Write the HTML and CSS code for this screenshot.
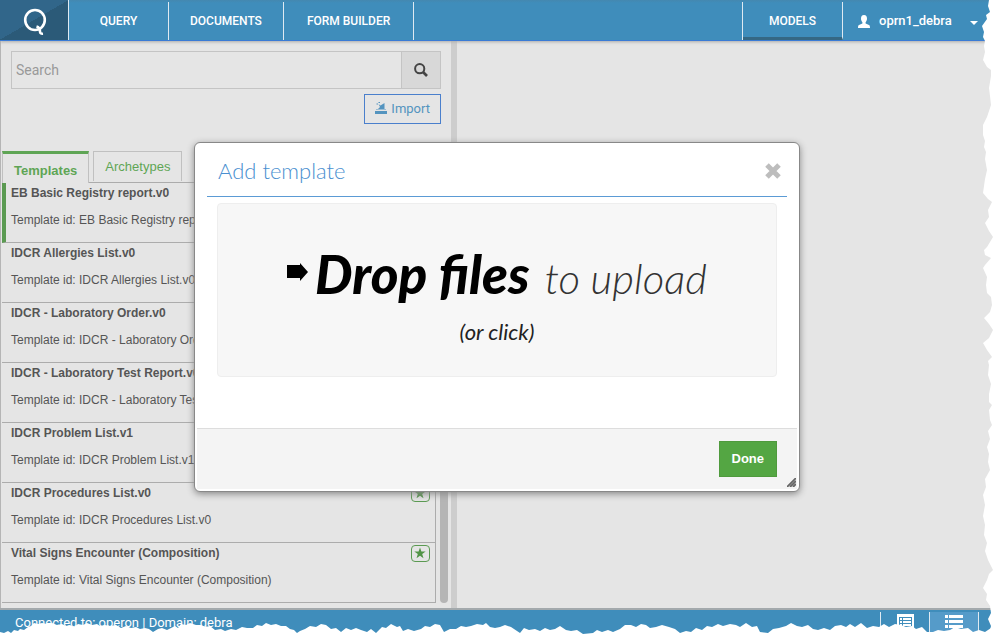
FILE: index.html
```
<!DOCTYPE html>
<html lang="en">
<head>
<meta charset="utf-8">
<title>Models</title>
<link rel="stylesheet" href="styles.css">
</head>
<body>
<svg width="0" height="0" class="defs" aria-hidden="true">
  <symbol id="star" viewBox="0 0 12 12"><path d="M6 .5l1.400 4H11.700L8.200 7l1.300 4.300L6 8.700 2.500 11.300 3.800 7 .3 4.500h4.300z"/></symbol>
</svg>
<div class="app">
  <header class="topbar">
    <a class="logo" href="#" aria-label="Home">
      <svg width="26" height="28" viewBox="0 0 26 28" fill="none" stroke="#fff" stroke-width="2.600"><ellipse cx="14" cy="12" rx="9.800" ry="10"/><path d="M15.500 18.500q3.500 1 3.500 5 0 2.500 3 2.200"/></svg>
    </a>
    <nav class="nav">
      <a href="#">QUERY</a>
      <a href="#">DOCUMENTS</a>
      <a href="#">FORM BUILDER</a>
    </nav>
    <nav class="nav nav-right">
      <a class="active" href="#">MODELS</a>
    </nav>
    <button class="user" type="button">
      <svg width="12" height="13" viewBox="0 0 12 13" fill="#fff"><path d="M6 0C3.800 0 3 1.600 3 3.600c0 1.600.6 2.800 1.400 3.600v1.300L1 10C.3 10.400 0 11 0 13h12c0-2-.3-2.600-1-3L7.600 8.500V7.200C8.400 6.400 9 5.200 9 3.600 9 1.600 8.200 0 6 0z"/></svg>
      <span>oprn1_debra</span>
      <svg class="caret" width="8" height="4" viewBox="0 0 8 4" fill="#fff"><path d="M0 0h8L4 4z"/></svg>
    </button>
  </header>

  <main class="workspace">
    <section class="sidebar">
      <div class="tools">
        <form class="search">
          <input type="text" placeholder="Search" aria-label="Search">
          <button type="button" aria-label="Run search">
            <svg width="14" height="14" viewBox="0 0 14 14" fill="none" stroke="#444" stroke-width="2"><circle cx="5.700" cy="5.700" r="4.600"/><path d="M9 9l4 4" stroke-width="2.600"/></svg>
          </button>
        </form>
        <button class="import" type="button">
          <svg width="12" height="12" viewBox="0 0 12 12" fill="#5494bf"><path d="M0 9h12v3H0zM1 7.500h10V8H1zM3.500 2l2 1.500L9.500 1v6H3l2-2z"/><path d="M1.500 1.500h1.500v1H1.500zM3.500 0H5v1H3.500z"/></svg>
          <span>Import</span>
        </button>
      </div>
      <div class="tabs" role="tablist">
        <button class="tab selected" type="button" role="tab" aria-selected="true">Templates</button>
        <button class="tab" type="button" role="tab" aria-selected="false">Archetypes</button>
      </div>
      <div class="list-wrap">
        <ul class="list">
          <li class="current"><div><h3>EB Basic Registry report.v0</h3><p>Template id: EB Basic Registry report.v0</p></div><button class="star" type="button" aria-label="Favourite"><svg width="12" height="12"><use href="#star"/></svg></button></li>
          <li><div><h3>IDCR Allergies List.v0</h3><p>Template id: IDCR Allergies List.v0</p></div><button class="star" type="button" aria-label="Favourite"><svg width="12" height="12"><use href="#star"/></svg></button></li>
          <li><div><h3>IDCR - Laboratory Order.v0</h3><p>Template id: IDCR - Laboratory Order.v0</p></div><button class="star" type="button" aria-label="Favourite"><svg width="12" height="12"><use href="#star"/></svg></button></li>
          <li><div><h3>IDCR - Laboratory Test Report.v0</h3><p>Template id: IDCR - Laboratory Test Report.v0</p></div><button class="star" type="button" aria-label="Favourite"><svg width="12" height="12"><use href="#star"/></svg></button></li>
          <li><div><h3>IDCR Problem List.v1</h3><p>Template id: IDCR Problem List.v1</p></div><button class="star" type="button" aria-label="Favourite"><svg width="12" height="12"><use href="#star"/></svg></button></li>
          <li><div><h3>IDCR Procedures List.v0</h3><p>Template id: IDCR Procedures List.v0</p></div><button class="star" type="button" aria-label="Favourite"><svg width="12" height="12"><use href="#star"/></svg></button></li>
          <li><div><h3>Vital Signs Encounter (Composition)</h3><p>Template id: Vital Signs Encounter (Composition)</p></div><button class="star" type="button" aria-label="Favourite"><svg width="12" height="12"><use href="#star"/></svg></button></li>
        </ul>
        <div class="scrollbar"></div>
      </div>
    </section>
    <div class="splitter"></div>
    <section class="detail"></section>
  </main>

  <footer class="statusbar">
    <p>Connected to: operon | Domain: debra</p>
    <div class="views">
      <button type="button" aria-label="Form view">
        <svg width="17" height="17" viewBox="0 0 17 17"><path d="M0 0h17v17H0z" fill="#fff"/><path d="M2 3h13v12H2z" fill="#3f8dbb"/><path d="M3 4h2v2H3zM6 4h8v2H6zM3 7h2v2H3zM6 7h8v2H6zM3 10h2v2H3zM6 10h8v2H6z" fill="#fff"/></svg>
      </button>
      <button class="on" type="button" aria-label="List view">
        <svg width="18" height="16" viewBox="0 0 18 16" fill="#fff"><path d="M0 1h3v3H0zM4 1h14v3H4zM0 6h3v3H0zM4 6h14v3H4zM0 11h3v3H0zM4 11h14v3H4z"/></svg>
      </button>
    </div>
  </footer>
</div>

<div class="overlay">
  <section class="dialog" role="dialog" aria-labelledby="dialog-title">
    <header>
      <h2 id="dialog-title">Add template</h2>
      <button class="close" type="button" aria-label="Close">
        <svg width="16" height="16" viewBox="0 0 16 16" stroke="#bdbdbd" stroke-width="5"><path d="M2 2l12 12M14 2L2 14"/></svg>
      </button>
    </header>
    <button class="dropzone" type="button">
      <span class="drop-line">
        <svg width="21" height="18" viewBox="0 0 21 18"><path d="M0 2h13V0l8 9-8 9v-3H0z"/></svg>
        <strong>Drop files</strong>
        <em>to upload</em>
      </span>
      <span class="click">(or click)</span>
    </button>
    <footer>
      <button class="done" type="button">Done</button>
      <svg class="grip" width="9" height="9" viewBox="0 0 9 9" stroke="#666" stroke-width="1.800"><path d="M0 9L9 0M3 9l6-6M6 9l3-3"/></svg>
    </footer>
  </section>
</div>

<svg class="tear-bottom" viewBox="0 0 994 30" preserveAspectRatio="none" fill="#fff" aria-hidden="true"><path d="M0 30V28L4 29 8 27 11 29 14 26 18 27 20 25 24 26 28 23 31 22 34 19 38 20 42 19 47 20 52 19 57 21 62 20 66 22 70 21 74 23 78 20 83 21 87 19 92 21 97 20 100 22 105 21 110 22 116 21 121 24 126 22 131 24 136 23 140 25 145 24 149 25 153 28 158 25 162 24 167 26 171 24 175 22 178 24 181 20 186 21 190 19 196 21 201 21 205 23 210 22 215 26 221 25 225 27 231 25 236 26 242 23 247 24 253 24 257 21 262 22 266 19 271 21 276 20 281 22 286 22 290 25 294 26 297 29 300 27 305 25 310 22 316 23 321 20 326 21 331 25 336 24 341 28 346 24 351 26 356 24 361 26 367 28 371 25 376 29 382 23 386 24 391 20 397 23 400 22 403 27 408 25 414 27 421 25 425 22 430 23 435 20 440 21 444 28 450 25 456 25 461 22 466 23 471 22 477 20 483 21 486 19 490 23 495 24 500 23 505 21 511 23 517 27 520 29 524 24 529 26 535 25 540 27 545 24 550 26 555 25 560 22 566 26 571 27 577 26 583 30 593 29 597 26 602 28 608 26 613 28 620 25 625 21 631 21 636 23 641 20 646 21 650 24 656 23 662 21 669 23 675 25 680 29 686 27 691 28 696 24 702 26 707 22 712 23 718 20 723 22 730 20 736 21 740 23 746 19 752 23 757 22 760 28 768 29 773 25 779 24 786 22 791 19 797 22 802 23 808 21 813 25 818 26 824 24 830 26 835 22 841 21 846 23 850 20 855 23 861 19 867 24 873 22 879 23 884 20 889 23 895 20 901 21 906 23 912 22 916 25 922 23 927 28 933 28 938 26 944 27 950 26 955 23 961 25 968 24 973 28 979 26 985 28 991 24 994 19V30z"/></svg>
<svg class="tear-right" viewBox="0 0 14 634" preserveAspectRatio="none" fill="#fff" aria-hidden="true"><path d="M14 0H9L8 6 10 12 6 15 7 19 2 26 4 32 3 37 5 41 4 46 5 52 3 60 7 67 11 70 11 76 9 88 10 96 11 105 7 117 3 125 3 135 5 141 4 147 6 152 5 159 7 170 5 179 3 193 8 199 12 202 8 210 9 217 5 223 9 231 13 237 7 247 4 250 5 255 11 258 5 265 3 268 7 277 6 285 7 293 11 297 12 305 10 312 4 318 9 324 13 330 9 338 3 343 7 350 12 357 8 361 9 365 8 375 11 384 9 394 9 402 12 405 9 410 10 420 12 425 8 431 10 439 7 447 9 454 8 462 10 470 5 479 6 487 3 495 5 505 3 516 5 525 4 535 7 543 5 551 8 560 13 570 9 574 7 580 3 588 7 594 6 600 10 606 11 613 8 619 11 626 9 634H14z"/></svg>
</body>
</html>
```
FILE: styles.css
```
* { box-sizing: border-box; }

body {
  margin: 0;
  background: #fff;
  color: #555;
  font: 12px/16px "Liberation Sans", Arial, sans-serif;
}

h2, h3, p, ul { margin: 0; padding: 0; }
button, input { font: inherit; color: inherit; margin: 0; }
button { cursor: pointer; }
svg { display: block; flex: none; }
.defs { position: absolute; }

.app {
  display: flex;
  flex-direction: column;
  min-height: 100vh;
  overflow: hidden;
}

/* Top bar */
.topbar {
  display: flex;
  height: 41px;
  padding-top: 2px;
  background: linear-gradient(#4488b0, #3f8dbb 3px);
  border-bottom: 1px solid #3a7bd5;
  box-shadow: 0 1px 3px #aaa;
  font: 500 13px/38px Roboto, sans-serif;
  color: #fff;
  position: relative;
}

.logo {
  width: 69px;
  margin-top: -2px;
  display: flex;
  align-items: center;
  justify-content: center;
  padding-top: 4px;
  border-right: 1px solid #dfeaf2;
  background: linear-gradient(150deg, #31668a 50%, #2b5a78 50%);
}

.nav { display: flex; font-size: 12px; }
.nav a {
  padding: 0 23px;
  min-width: 100px;
  text-align: center;
  border-right: 1px solid #dfeaf2;
  color: #fff;
  text-decoration: none;
}
.nav a:nth-child(2) { padding: 0 21px; }
.nav-right { margin-left: auto; border-left: 1px solid #dfeaf2; }
.nav a.active { border-bottom: 3px solid #356884; }

.user {
  display: flex;
  align-items: center;
  width: 151px;
  padding: 0 15px;
  border: 0;
  background: none;
}
.user span { margin-left: 9px; }
.user .caret { margin: 3px 0 0 18px; }

/* Workspace */
.workspace { flex: 1; display: flex; background: #e5e5e5; }

.sidebar {
  width: 451px;
  display: flex;
  flex-direction: column;
  border-left: 1px solid #b5b5b5;
}
.splitter { width: 6px; background: #cdcdcd; }
.detail { flex: 1; }

.tools {
  display: flex;
  flex-direction: column;
  align-items: flex-end;
  gap: 5px;
  padding: 10px 10px 0;
  font: 14px/20px Roboto, sans-serif;
}

.search { display: flex; align-self: stretch; height: 38px; }
.search input {
  flex: 1;
  min-width: 0;
  padding: 0 4px;
  border: 1px solid #c4c4c4;
  background: #e5e5e5;
}
.search input::placeholder { color: #999; opacity: 1; }
.search button {
  width: 39px;
  padding: 0 12px;
  border: 1px solid #c4c4c4;
  border-left: 0;
  background: #d8d8d8;
}

.import {
  display: flex;
  gap: 4px;
  height: 30px;
  padding: 4px 10px;
  border: 1px solid #4a7fcc;
  background: none;
  color: #5494bf;
  font-size: 13px;
}
.import svg { margin-top: 3px; }

.tabs {
  display: flex;
  gap: 4px;
  height: 32px;
  margin: 27px 0 -1px 1px;
  font-size: 13px;
}
.tab {
  height: 30px;
  padding: 0 11px;
  border: 1px solid #c0c0c0;
  border-bottom: 0;
  background: #e5e5e5;
  color: #5fa555;
}
.tab.selected {
  height: 32px;
  padding: 4px 11px 0;
  border-top: 3px solid #5fa555;
  font-weight: bold;
  z-index: 1;
}

.list-wrap { flex: 1; display: flex; padding: 0 3px 5px 1px; }
.list {
  flex: 1;
  list-style: none;
  border: solid #acacac;
  border-width: 1px 1px 0 0;
  margin-right: 4px;
}
.list li {
  display: flex;
  justify-content: space-between;
  height: 60px;
  padding: 2px 5px 0 9px;
  border-bottom: 1px solid #acacac;
}
.list li.current { padding-left: 5px; border-left: 4px solid #5b9a52; }
.list h3 { font-size: 12px; line-height: 17px; }
.list p { margin-top: 10px; line-height: 17px; }

.star {
  width: 19px;
  height: 17px;
  padding: 1px 0 2px 2px;
  border: 1px solid #5b9a52;
  border-radius: 4px;
  background: none;
}
.star svg { fill: #529447; }
.scrollbar { width: 8px; border-radius: 4px; background: #b5b5b5; }

/* Status bar */
.statusbar {
  display: flex;
  justify-content: space-between;
  height: 28px;
  padding: 0 15px;
  border-top: 2px solid #a3a9ac;
  background: #3f8dbb;
  color: #fff;
  font: 13px/26px Roboto, sans-serif;
}
.views { display: flex; padding-top: 2px; }
.views button {
  display: flex;
  justify-content: center;
  align-items: flex-start;
  width: 49px;
  padding: 2px 0 0;
  border: 0;
  border-left: 1px solid #dfeaf2;
  background: none;
}
.views .on { width: 50px; background: #559bc9; border-right: 1px solid #dfeaf2; }

/* Dialog */
.overlay {
  position: absolute;
  inset: 0;
  display: flex;
  align-items: center;
  justify-content: center;
}
.dialog {
  width: 606px;
  max-width: 100%;
  padding: 2px;
  border: 1px solid #888;
  border-radius: 6px;
  background: #fff;
  box-shadow: 0 2px 7px #888;
}
.dialog header {
  display: flex;
  align-items: center;
  justify-content: space-between;
  height: 52px;
  margin: 0 10px 6px;
  padding: 0 6px 0 11px;
  border-bottom: 1px solid #5b9bd5;
}
.dialog h2 { color: #4a8fd0; font: 300 22px/28px Lato, sans-serif; }
.close { padding: 0; border: 0; background: none; }

.dropzone {
  display: block;
  width: calc(100% - 40px);
  height: 174px;
  margin: 0 20px 51px;
  padding: 16px 0 0;
  border: 1px solid #eee;
  border-radius: 4px;
  background: #f7f7f7;
  color: #000;
  font-family: Lato, sans-serif;
  font-style: italic;
}
.drop-line {
  display: flex;
  align-items: baseline;
  justify-content: center;
  line-height: 64px;
}
.drop-line svg { margin-right: 7px; align-self: center; margin-bottom: 8px; }
.drop-line strong { font-size: 53px; font-weight: 900; margin-right: 15px; }
.drop-line em { font-size: 42px; font-weight: 300; color: #333; }
.click { display: block; font-size: 22px; line-height: 44px; color: #222; }

.dialog footer {
  display: flex;
  justify-content: flex-end;
  align-items: flex-end;
  gap: 10px;
  height: 61px;
  padding: 0 1px 2px 0;
  border-top: 1px solid #ddd;
  background: #f4f4f4;
}
.done {
  height: 36px;
  margin-bottom: 10px;
  padding: 0 12px;
  border: 1px solid #4f9a3d;
  background: #54a643;
  color: #fff;
  font-weight: bold;
  font-size: 13px;
}

/* Torn paper edges */
.tear-bottom, .tear-right { position: absolute; pointer-events: none; }
.tear-bottom { left: 0; bottom: 0; width: 100%; height: 30px; }
.tear-right { right: 0; top: 0; width: 14px; height: 100%; }
```
